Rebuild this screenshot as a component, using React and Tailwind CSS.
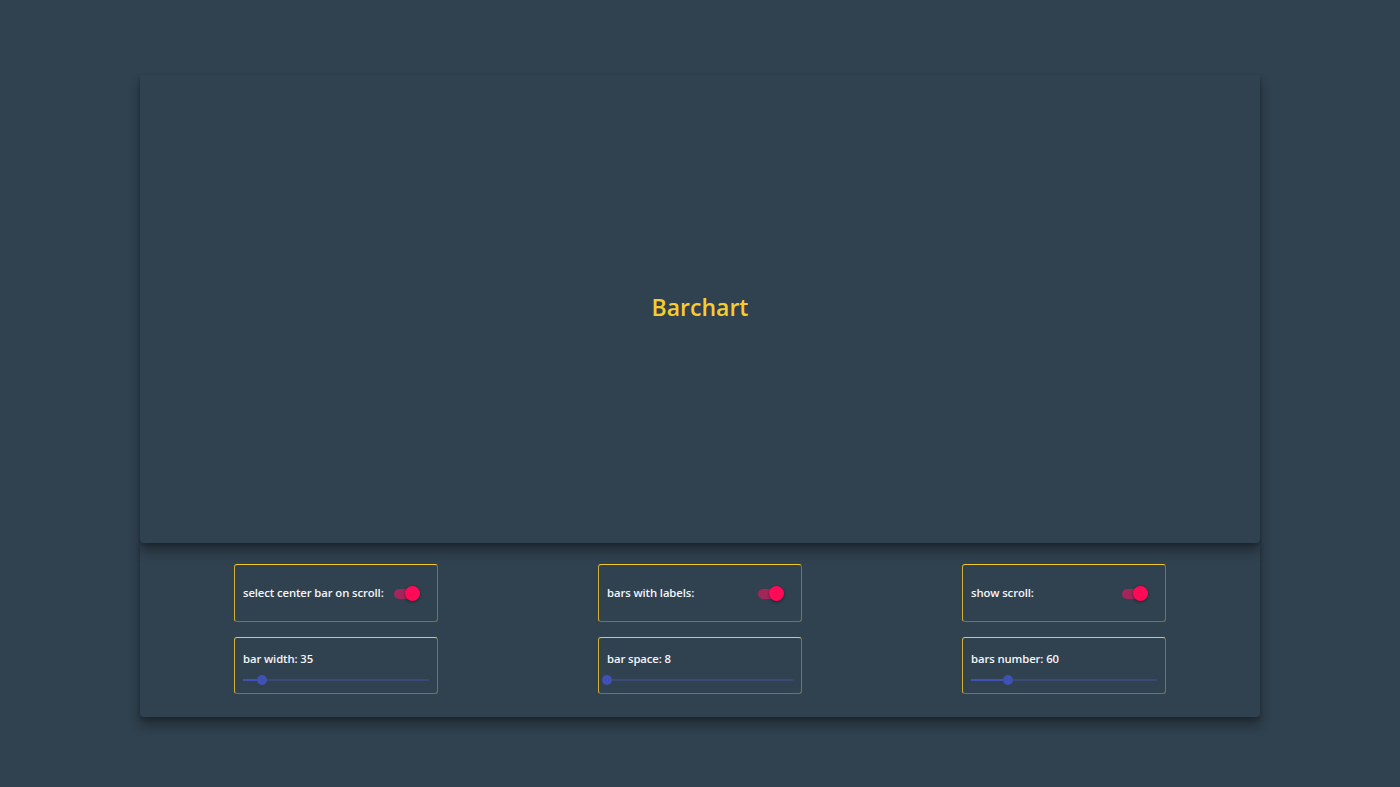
import React from 'react'

const Toggle = () => (
  <div className="relative w-[26px] h-[16px] mr-[17px] flex items-center">
    <div className="absolute left-0 right-[2px] h-[10px] rounded-full bg-[#a3265a]" />
    <div className="absolute right-0 w-[15px] h-[15px] rounded-full bg-[#ff0a56] shadow-[0_1px_3px_rgba(0,0,0,0.45)]" />
  </div>
)

const Slider = ({ pct }) => (
  <div className="relative h-[10px] mx-[8px] flex items-center">
    <div className="absolute inset-x-0 h-[2px] bg-[#3a4a78]" />
    <div className="absolute left-0 h-[2px] bg-[#3f51b5]" style={{ width: `${pct}%` }} />
    <div
      className="absolute w-[10px] h-[10px] -ml-[5px] rounded-full bg-[#3f51b5]"
      style={{ left: `${pct}%` }}
    />
  </div>
)

const Box = ({ children }) => (
  <div className="w-[204px] rounded-[3px] border border-t-[#f3c62a] border-l-[#d1ae36] border-r-[#7b7449] border-b-[#7b7449]">
    {children}
  </div>
)

const SwitchBox = ({ label }) => (
  <Box>
    <div className="h-[56px] flex items-center justify-between pl-[8px] pt-[1px]">
      <span className="text-[11.3px] font-semibold text-[#f4f6f8] tracking-[-0.1px]">{label}</span>
      <Toggle />
    </div>
  </Box>
)

const SliderBox = ({ label, pct }) => (
  <Box>
    <div className="h-[55px] pt-[13px]">
      <div className="text-[11.3px] font-semibold text-[#f4f6f8] pl-[8px] leading-[16px] tracking-[-0.1px]">{label}</div>
      <div className="mt-[8px]">
        <Slider pct={pct} />
      </div>
    </div>
  </Box>
)

export default function App() {
  return (
    <div
      className="min-h-[787px] bg-[#30414f] pt-[75px]"
      style={{ fontFamily: '"Open Sans", "Noto Sans", sans-serif' }}
    >
      <div className="w-[1120px] mx-auto">
        <div className="relative z-10 h-[468px] bg-[#30414f] rounded-b-[4px] shadow-[0_8px_12px_rgba(0,0,0,0.33),0_2px_4px_rgba(0,0,0,0.2)] flex items-center justify-center">
          <h1 className="text-[23px] font-semibold text-[#f7cd2e] -mt-[3px]">Barchart</h1>
        </div>
        <div className="h-[174px] bg-[#30414f] rounded-b-[4px] shadow-[0_8px_12px_rgba(0,0,0,0.33),0_2px_4px_rgba(0,0,0,0.2)] px-[94px] pt-[21px] flex flex-col gap-[15px]">
          <div className="flex justify-between">
            <SwitchBox label="select center bar on scroll:" />
            <SwitchBox label="bars with labels:" />
            <SwitchBox label="show scroll:" />
          </div>
          <div className="flex justify-between">
            <SliderBox label="bar width: 35" pct={10} />
            <SliderBox label="bar space: 8" pct={0} />
            <SliderBox label="bars number: 60" pct={20} />
          </div>
        </div>
      </div>
    </div>
  )
}
